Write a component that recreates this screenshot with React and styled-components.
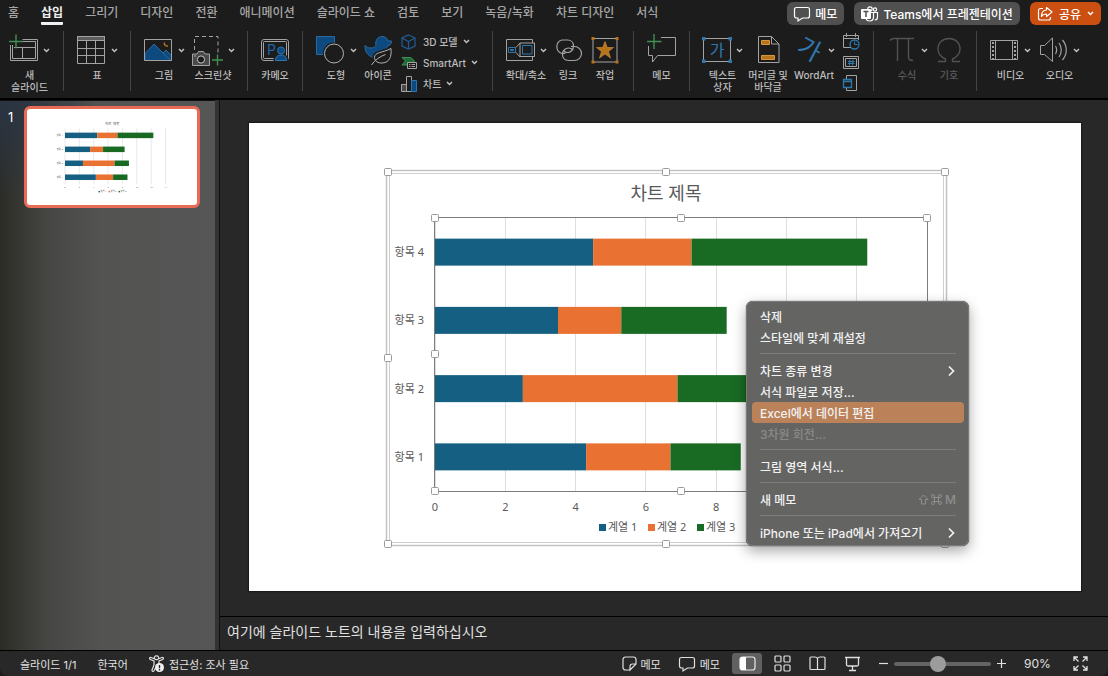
import React from "react";
import styled, { createGlobalStyle } from "styled-components";

const LINE = "#a3a3a3";
const BLUE = "#0d4a80";
const SKY = "#2f78ad";
const ORANGE = "#b8741a";
const GREEN = "#3f9150";
const BG = "#1c1c1c";

const SERIES = [
  { name: "계열 1", color: "#156082" },
  { name: "계열 2", color: "#e97132" },
  { name: "계열 3", color: "#196b24" }
];

const ROWS = [
  { name: "항목 4", values: [4.5, 2.8, 5] },
  { name: "항목 3", values: [3.5, 1.8, 3] },
  { name: "항목 2", values: [2.5, 4.4, 2] },
  { name: "항목 1", values: [4.3, 2.4, 2] }
];

const TABS = [
  "홈",
  "삽입",
  "그리기",
  "디자인",
  "전환",
  "애니메이션",
  "슬라이드 쇼",
  "검토",
  "보기",
  "녹음/녹화",
  "차트 디자인",
  "서식"
];

const MENU = [
  [{ text: "삭제" }, { text: "스타일에 맞게 재설정" }],
  [
    { text: "차트 종류 변경", sub: true },
    { text: "서식 파일로 저장..." },
    { text: "Excel에서 데이터 편집", active: true },
    { text: "3차원 회전...", disabled: true }
  ],
  [{ text: "그림 영역 서식..." }],
  [{ text: "새 메모", keys: "M" }],
  [{ text: "iPhone 또는 iPad에서 가져오기", sub: true }]
];

/* ---------- icons ---------- */

const Svg = ({ w, h, children }) => (
  <svg
    width={w}
    height={h}
    viewBox={`0 0 ${w} ${h}`}
    fill="none"
    stroke={LINE}
    strokeWidth="1"
    aria-hidden="true"
  >
    {children}
  </svg>
);

const Big = ({ children }) => (
  <Svg w={30} h={32}>
    {children}
  </Svg>
);

const Chevron = ({ color = "#c4c4c4" }) => (
  <Svg w={7} h={5}>
    <path d="M1 1l2.5 2.6L6 1" stroke={color} strokeWidth="1.4" />
  </Svg>
);

const NewSlideIcon = () => (
  <Big>
    <path d="M1.5 11v15.500h27v-21h-15M3.500 11v13.500h23v-17h-13M5 13.500h21.500M13.500 13.500v11" />
    <path d="M7 .5v14M0 7.500h14" stroke={GREEN} strokeWidth="1.4" />
  </Big>
);

const TableIcon = () => (
  <Big>
    <path d="M.5 2.500h27v4h-27z" fill="#5c5c5c" />
    <path d="M.5 2.500h27v27h-27zM9.500 6.500v23M18.500 6.500v23M.5 14.500h27M.5 21.500h27" />
  </Big>
);

const PictureIcon = () => (
  <Big>
    <path
      d="M1 19.500l9-9.500 9 9 3-3 5.500 5.500V26.500H1z"
      fill={BLUE}
      stroke="#2a6a9f"
    />
    <path d="M16 16l10 10" stroke="#2a6a9f" />
    <path d="M20.500 8.500a2.600 2.600 0 0 0 3.500 3.300" stroke={ORANGE} strokeWidth="1.4" />
    <path d="M.5 5.500h27v21H.5z" />
  </Big>
);

const ScreenshotIcon = () => (
  <Svg w={32} h={32}>
    <path d="M2.500 16V2.500h23.500V20" strokeDasharray="4 3" />
    <path d="M.5 20h4.500l1.500-2.500h5L13 20h4.500v11.500H.5z" fill="#4a4a4a" />
    <circle cx="9" cy="25.500" r="3.600" fill={BG} stroke="#c4c4c4" />
    <path d="M2 22h2" />
    <path d="M25.500 20.500v11M20 26h11" stroke={GREEN} strokeWidth="1.4" />
  </Svg>
);

const CameoIcon = () => (
  <Big>
    <rect x="1.500" y="5.500" width="27" height="21" rx="2.500" />
    <rect x="3.500" y="7.500" width="23" height="17" rx="1" />
    <text
      x="7"
      y="21"
      fill="#1f65a5"
      stroke="none"
      fontSize="14"
      fontFamily="Inter, sans-serif"
    >
      P
    </text>
    <path d="M15 27c0-4 2.500-6 6-6s6 2 6 6z" fill={BLUE} stroke={BG} strokeWidth="3" />
    <path d="M15.500 26.500c0-4 2.500-5.500 5.500-5.500s5.500 1.500 5.500 5.500z" fill={BLUE} stroke="#2d74b0" />
    <circle cx="21" cy="16.500" r="3.500" fill={BLUE} stroke="#2d74b0" />
  </Big>
);

const ShapesIcon = () => (
  <Big>
    <path d="M.5 2.500h18v18H.5z" fill={BLUE} stroke="#2a6a9f" />
    <circle cx="18" cy="19.500" r="11" fill={BG} stroke="none" />
    <circle cx="18" cy="19.500" r="9.500" stroke="#b4b4b4" />
  </Big>
);

const DuckIcon = () => (
  <Big>
    <path
      d="M2 11.500c3 3 7 3 9.500 1.500 1-.6 1.500-1.200 1.300-2.300C12.300 6 15 2.500 19 2.500c3.300 0 5.500 2 6 4.500h3.500c0 3-1.500 4.500-4 4.800-.5 2.200-1.800 3.200-1.800 5 0 3-4 7-9.700 7C6 23.800 1.500 18 2 11.500z"
      fill={BLUE}
      stroke="#2a6a9f"
    />
    <path
      d="M28 14.500c.8 8-1.500 14-8.500 14.500-4.500.3-8-1.700-8-5.500 0-5.500 8-4.500 16.500-9z"
      fill={BG}
      stroke={BG}
      strokeWidth="4"
    />
    <path
      d="M28 14.500c.8 8-1.500 14-8.500 14.500-4.500.3-8-1.700-8-5.500 0-5.500 8-4.500 16.500-9zM8.500 31c3-4.500 8-8.500 14-10.500"
      stroke="#b4b4b4"
    />
  </Big>
);

const CubeIcon = () => (
  <Svg w={17} h={16}>
    <path
      d="M7.500 1L14 4v8l-6.500 3L1 12V4zM1 4l6.500 3.500L14 4M7.500 7.500V15"
      stroke="#1f5c96"
      strokeWidth="1.200"
    />
  </Svg>
);

const SmartArtIcon = () => (
  <Svg w={17} h={16}>
    <path d="M1 2.500h9L13.500 6l-3 4H1l3.500-4z" fill="#1f6b35" stroke={GREEN} />
    <path d="M6.500 7.500h9v6h-9z" fill={BG} />
    <path d="M8 9.500h1.500M10.500 9.500H14M8 11.500h1.500M10.500 11.500H14" />
  </Svg>
);

const ColumnsIcon = () => (
  <Svg w={17} h={16}>
    <path d="M.5 8.500h5v7h-5z" fill="#4a4a4a" />
    <path d="M5.500.5h5v15h-5z" />
    <path d="M10.500 4.500h5v11h-5z" fill={BLUE} stroke="#2d74b0" />
  </Svg>
);

const ZoomIcon = () => (
  <Big>
    <path d="M13 26.500H.5v-21h26V9M26.500 23v3.500H13" />
    <path d="M2.500 13.500h7v5h-7z" stroke={SKY} />
    <path d="M4.500 15.500h3v1h-3z" stroke={SKY} />
    <path d="M10 13.500l4-4.500M10 18.500l4 4.500" />
    <path d="M14 9h14.500v13.500H14z" fill={BG} />
    <path d="M16.500 11.500h9.500v8.500h-9.500z" stroke={SKY} />
  </Big>
);

const LinkIcon = () => (
  <Big>
    <path
      d="M12.500 19.500H9a7 7 0 0 1 0-13.500h5.500c4 0 6 3 6 6 0 4-3 6.500-6 6.500-2 0-3.500-.8-4.500-2"
      strokeWidth="1.200"
    />
    <path
      d="M18 12.500h3.500a7 7 0 0 1 0 14h-6c-4 0-6-3-6-6 0-4 3-6.500 6-6.500 2 0 3.500.8 4.500 2"
      strokeWidth="1.200"
    />
  </Big>
);

const ActionIcon = () => (
  <Big>
    <path d="M3 4.500h24v23.500H3z" />
    <path
      d="M15 7.500l2.300 6h6.200l-5 4 2 6.500-5.500-4-5.500 4 2-6.500-5-4h6.200z"
      fill={ORANGE}
      stroke="#cf9544"
      strokeWidth=".6"
    />
    <path
      d="M1.500 3h3v3h-3zM25.500 3h3v3h-3zM1.500 26.500h3v3h-3zM25.500 26.500h3v3h-3z"
      fill={ORANGE}
      stroke="none"
    />
  </Big>
);

const CommentIcon = () => (
  <Big>
    <path d="M14 3.500h14.500v18h-18l-5 6.500v-6.500h-4V12" />
    <path d="M7 0v15M0 7.500h14.500" stroke={GREEN} strokeWidth="1.400" />
  </Big>
);

const TextBoxIcon = () => (
  <Big>
    <path d="M1.500 4.500h27v23h-27z" />
    <path
      d="M0 3h3.500v3.500H0zM26.500 3H30v3.500h-3.500zM0 25.500h3.500V29H0zM26.500 25.500H30V29h-3.500z"
      fill={SKY}
      stroke="none"
    />
    <text
      x="15"
      y="22"
      fill={SKY}
      stroke="none"
      fontSize="16"
      textAnchor="middle"
      fontFamily="'Noto Sans CJK KR', sans-serif"
    >
      가
    </text>
  </Big>
);

const HeaderIcon = () => (
  <Big>
    <path d="M5.500 2.500h13l7.500 7.500v18.500H5.500zM18.500 2.500V10H26" />
    <path d="M8.500 6.500h8v4h-8zM8.500 21.500h13v4h-13z" fill={ORANGE} stroke="#d3963c" />
  </Big>
);

const WordArtIcon = () => (
  <Big>
    <text
      x="15"
      y="24"
      fill={SKY}
      stroke="none"
      fontSize="25"
      textAnchor="middle"
      transform="rotate(28 15 16)"
      fontFamily="'Noto Sans CJK KR', sans-serif"
    >
      가
    </text>
  </Big>
);

const DateIcon = () => (
  <Svg w={17} h={17}>
    <path d="M8 14.500H.5V2.500h15V7M.5 5.500h15M3.500 0v4M12.500 0v4" />
    <circle cx="11.500" cy="11.500" r="4.500" fill={BG} stroke={SKY} strokeWidth="1.300" />
    <path d="M11.500 8.500v3h3" stroke={SKY} />
  </Svg>
);

const NumberIcon = () => (
  <Svg w={17} h={17}>
    <path d="M.5 2.500h15v12H.5zM2.500 4.500h11v8h-11z" />
    <path d="M7 5.500L6.500 11.500M10 5.500L9.500 11.500M5 7.500h6.500M5 9.500h6.500" stroke={SKY} />
  </Svg>
);

const ObjectIcon = () => (
  <Svg w={17} h={17}>
    <path d="M3.500 4V.5h10v15h-10V13" />
    <path d="M.5 4.500h8v8h-8zM.5 6.500h8" stroke={SKY} strokeWidth="1.300" />
  </Svg>
);

const FilmIcon = () => (
  <Big>
    <path d="M.5 6.500h27v19H.5zM5.500 6.500v19M22.500 6.500v19" />
    <path d="M3 8v17M25 8v17" strokeWidth="2" strokeDasharray="2 2" />
  </Big>
);

const AudioIcon = () => (
  <Big>
    <path d="M1.500 11.500h4L13.500 4v23.500L5.500 20.500h-4z" />
    <path d="M16.500 12c1.500 2 1.500 6 0 8M20 9c3 4 3 10 0 14M23.500 6c5 6 5 14 0 20" strokeWidth="1.200" />
  </Big>
);

const PiIcon = () => (
  <Big>
    <path
      d="M3 6.500c1-1.500 2-2 4-2h20M10.500 5v22M21.500 5v18c0 2.500 1 3.500 4.500 3.500"
      stroke="#525252"
      strokeWidth="1.400"
    />
  </Big>
);

const OmegaIcon = () => (
  <Big>
    <path
      d="M4 27.500h7.500V25C6 22.500 4 19 4 15 4 8.500 9 4.500 15 4.500S26 8.500 26 15c0 4-2 7.500-7.500 10v2.500H26"
      stroke="#525252"
      strokeWidth="1.400"
    />
  </Big>
);

const BubbleIcon = ({ color = "#fff" }) => (
  <Svg w={17} h={16}>
    <path
      d="M2.500 1.500h11c1 0 2 .8 2 2v6.500c0 1.200-1 2-2 2H8.500L4 15v-3H2.500c-1 0-2-.8-2-2V3.500c0-1.200 1-2 2-2z"
      stroke={color}
      strokeWidth="1.200"
    />
  </Svg>
);

const TeamsIcon = () => (
  <Svg w={18} h={16}>
    <circle cx="9" cy="3" r="2.200" stroke="#fff" strokeWidth="1.200" />
    <circle cx="14" cy="3.500" r="1.600" stroke="#fff" strokeWidth="1.200" />
    <path
      d="M10 6.500h6.500V11c0 2-1.200 3-2.800 3M12.500 6.500V11c0 2.500-1.500 4-4 4-1.500 0-3-.8-3.500-2"
      stroke="#fff"
      strokeWidth="1.200"
    />
    <rect x="0" y="3" width="10" height="10" rx="1" fill="#fff" stroke="none" />
    <path d="M2.500 5.500h5M5 5.500V11" stroke="#505050" strokeWidth="1.500" />
  </Svg>
);

const ShareIcon = () => (
  <Svg w={16} h={16}>
    <path
      d="M6 2.500H3.500c-1.200 0-2 .8-2 2V12c0 1.200.8 2 2 2h8c1.200 0 2-.8 2-2v-1"
      stroke="#fff"
      strokeWidth="1.200"
    />
    <path
      d="M9.500 1.500L15 6l-5.500 4.500V8C7 8 5.500 8.800 4.500 10.500c0-4 2-6.300 5-6.500z"
      stroke="#fff"
      strokeWidth="1.200"
      strokeLinejoin="round"
    />
  </Svg>
);

const AccessIcon = () => (
  <Svg w={16} h={18}>
    <path
      d="M7.500 1a1.800 1.800 0 0 1 1.800 2.800L13 2.500c1.500-.3 2 1.500.7 2L10 6v3M7.500 1a1.800 1.800 0 0 0-1.800 2.800L2 2.500C.5 2.200 0 4 1.300 4.500L5 6v4l-2 5c-.4 1.500 1.300 2 2 .8L6.500 13M5.500 3.800c1 1 3 1 4 0"
      stroke="#e0e0e0"
      strokeWidth="1.200"
    />
    <circle cx="10.500" cy="12.500" r="4.500" fill="#f2f2f2" stroke="none" />
    <path d="M10.500 10v3.200M10.500 14v1.400" stroke="#282828" strokeWidth="1.400" />
  </Svg>
);

const NoteIcon = () => (
  <Svg w={15} h={15}>
    <path
      d="M8 14H3.500A2.500 2.500 0 0 1 1 11.500v-8A2.500 2.500 0 0 1 3.500 1h8A2.500 2.500 0 0 1 14 3.500V8l-6 6v-3.500A2.500 2.500 0 0 1 10.500 8H14"
      stroke="#e0e0e0"
      strokeWidth="1.200"
    />
  </Svg>
);

const NormalIcon = () => (
  <Svg w={17} h={15}>
    <rect x="1" y="1" width="15" height="13" rx="2.500" stroke="#e8e8e8" strokeWidth="1.200" />
    <path d="M3.500 1H7v13H3.500A2.500 2.500 0 0 1 1 11.500v-8A2.500 2.500 0 0 1 3.500 1z" fill="#fff" stroke="none" />
  </Svg>
);

const SorterIcon = () => (
  <Svg w={17} h={17}>
    {[1, 10].map(x =>
      [1, 10].map(y => (
        <rect
          key={`${x}-${y}`}
          x={x}
          y={y}
          width="6"
          height="6"
          rx="1"
          stroke="#e0e0e0"
          strokeWidth="1.200"
        />
      ))
    )}
  </Svg>
);

const ReadingIcon = () => (
  <Svg w={17} h={15}>
    <path
      d="M8.500 2.500C8 1.500 7 1 6 1H2C1.500 1 1 1.500 1 2v10.500c0 .5.500 1 1 1h13c.5 0 1-.5 1-1V2c0-.5-.5-1-1-1h-4c-1 0-2 .5-2.500 1.500v11"
      stroke="#e0e0e0"
      strokeWidth="1.200"
    />
  </Svg>
);

const ShowIcon = () => (
  <Svg w={17} h={16}>
    <path
      d="M1 1.500h15M2.500 2v6.500c0 1 .5 1.500 1.500 1.500h9c1 0 1.500-.5 1.500-1.500V2M8.500 10v4M5 14.500h7"
      stroke="#e0e0e0"
      strokeWidth="1.300"
    />
  </Svg>
);

const FitIcon = () => (
  <Svg w={15} h={15}>
    <path
      d="M1 5V1h4M1 1l4.500 4.500M10 1h4v4M14 1L9.500 5.500M1 10v4h4M1 14l4.500-4.500M14 10v4h-4M14 14L9.500 9.500"
      stroke="#e0e0e0"
      strokeWidth="1.300"
    />
  </Svg>
);

const MenuArrow = () => (
  <Svg w={8} h={12}>
    <path d="M1 1.500L5.500 6 1 10.500" stroke="#f2f2f2" strokeWidth="1.700" />
  </Svg>
);

const ShiftCommand = () => (
  <Svg w={24} h={11}>
    <path d="M5.500 1L10 5.500H7.500V10h-4V5.500H1z" stroke="#8e8e8d" />
    <path
      d="M16.500 3.500H15A1.500 1.500 0 1 1 16.500 2v7A1.500 1.500 0 1 1 15 7.500h7A1.500 1.500 0 1 1 20.500 9V2A1.500 1.500 0 1 1 22 3.500z"
      stroke="#8e8e8d"
    />
  </Svg>
);

/* ---------- chart ---------- */

const PLOT = { x: 186, y: 95, w: 492, h: 273, max: 14 };
const TICKS = [0, 2, 4, 6, 8, 10, 12, 14];
const scale = v => (v * PLOT.w) / PLOT.max;

const Chart = ({ selected, labels = TICKS }) => {
  const band = PLOT.h / ROWS.length;
  return (
    <ChartSvg viewBox="0 0 832 468" role="img" aria-label="차트 제목">
      <text x="417" y="77" fontSize="18" textAnchor="middle">
        차트 제목
      </text>
      {TICKS.map(v => (
        <line
          key={v}
          x1={PLOT.x + scale(v)}
          x2={PLOT.x + scale(v)}
          y1={PLOT.y}
          y2={PLOT.y + PLOT.h}
          stroke={selected ? "#dedede" : "#c8c8c8"}
          strokeWidth={selected ? 1 : 2}
          shapeRendering={selected ? "crispEdges" : undefined}
        />
      ))}
      {labels.map(v => (
        <text key={v} x={PLOT.x + scale(v)} y="388" textAnchor="middle">
          {v}
        </text>
      ))}
      {ROWS.map((row, i) => {
        const mid = PLOT.y + band * (i + 0.5);
        let start = PLOT.x;
        return (
          <g key={row.name}>
            <text x="175" y={mid + 4} textAnchor="end">
              {row.name}
            </text>
            {row.values.map((v, n) => {
              const x = start;
              start += scale(v);
              return (
                <rect
                  key={n}
                  x={x}
                  y={mid - 13.5}
                  width={scale(v)}
                  height="27"
                  fill={SERIES[n].color}
                />
              );
            })}
          </g>
        );
      })}
      {SERIES.map((s, i) => (
        <g key={s.name}>
          <rect x={350 + i * 49} y="401" width="7" height="7" fill={s.color} />
          <text x={359 + i * 49} y="408">
            {s.name}
          </text>
        </g>
      ))}
      {selected && (
        <g fill="none">
          <rect x="137.500" y="47.500" width="560" height="375" stroke="#c2c2c2" strokeWidth="1.500" />
          <rect x="140.500" y="50.500" width="554" height="369" stroke="#cfcfcf" />
          <rect
            x={PLOT.x - 0.5}
            y={PLOT.y - 0.5}
            width={PLOT.w + 1}
            height={PLOT.h + 1}
            stroke="#7c7c7c"
          />
          <Handles x={139} y={49} w={557} h={372} />
          <Handles x={PLOT.x} y={PLOT.y} w={PLOT.w} h={PLOT.h} />
        </g>
      )}
    </ChartSvg>
  );
};

const Handles = ({ x, y, w, h }) =>
  [0, 0.5, 1].map(a =>
    [0, 0.5, 1]
      .filter(b => !(a === 0.5 && b === 0.5))
      .map(b => (
        <rect
          key={`${a}-${b}`}
          x={Math.floor(x + w * a) - 3.5}
          y={Math.floor(y + h * b) - 3.5}
          width="7"
          height="7"
          rx="1"
          fill="#fff"
          stroke="#9a9a9a"
        />
      ))
  );

/* ---------- ribbon ---------- */

const Tool = ({ label, icon, menu, width = 30, disabled }) => (
  <ToolButton $width={width} disabled={disabled}>
    <ToolIcon>
      {icon}
      {menu && <Chevron />}
    </ToolIcon>
    <ToolLabel>{label}</ToolLabel>
  </ToolButton>
);

const Ribbon = () => (
  <RibbonBar>
    <Group $first>
      <Tool width={43} menu icon={<NewSlideIcon />} label={"새\n슬라이드"} />
    </Group>
    <Group>
      <Tool width={42} menu icon={<TableIcon />} label="표" />
    </Group>
    <Group>
      <Tool width={42} menu icon={<PictureIcon />} label="그림" />
      <Tool width={44} menu icon={<ScreenshotIcon />} label="스크린샷" />
    </Group>
    <Group>
      <Tool icon={<CameoIcon />} label="카메오" />
    </Group>
    <Group>
      <Tool width={42} menu icon={<ShapesIcon />} label="도형" />
      <Tool icon={<DuckIcon />} label="아이콘" />
      <Stack>
        <SmallButton>
          <CubeIcon />
          3D 모델
          <Chevron />
        </SmallButton>
        <SmallButton>
          <SmartArtIcon />
          SmartArt
          <Chevron />
        </SmallButton>
        <SmallButton>
          <ColumnsIcon />
          차트
          <Chevron />
        </SmallButton>
      </Stack>
    </Group>
    <Group>
      <Tool width={42} menu icon={<ZoomIcon />} label="확대/축소" />
      <Tool icon={<LinkIcon />} label="링크" />
      <Tool width={32} icon={<ActionIcon />} label="작업" />
    </Group>
    <Group>
      <Tool width={31} icon={<CommentIcon />} label="메모" />
    </Group>
    <Group>
      <Tool width={41} menu icon={<TextBoxIcon />} label={"텍스트\n상자"} />
      <Tool width={38} icon={<HeaderIcon />} label={"머리글 및\n바닥글"} />
      <Tool width={42} menu icon={<WordArtIcon />} label="WordArt" />
      <Stack $narrow>
        <SmallButton aria-label="날짜 및 시간">
          <DateIcon />
        </SmallButton>
        <SmallButton aria-label="슬라이드 번호">
          <NumberIcon />
        </SmallButton>
        <SmallButton aria-label="개체">
          <ObjectIcon />
        </SmallButton>
      </Stack>
    </Group>
    <Group>
      <Tool width={42} menu disabled icon={<PiIcon />} label="수식" />
      <Tool disabled icon={<OmegaIcon />} label="기호" />
    </Group>
    <Group $last>
      <Tool width={43} menu icon={<FilmIcon />} label="비디오" />
      <Tool width={43} menu icon={<AudioIcon />} label="오디오" />
    </Group>
  </RibbonBar>
);

const ContextMenu = () => (
  <MenuBox role="menu">
    {MENU.map((items, i) => (
      <MenuSection key={i}>
        {items.map(item => (
          <MenuItem
            key={item.text}
            role="menuitem"
            $active={item.active}
            disabled={item.disabled}
          >
            {item.text}
            {item.sub && <MenuArrow />}
            {item.keys && (
              <Shortcut>
                <ShiftCommand />
                {item.keys}
              </Shortcut>
            )}
          </MenuItem>
        ))}
      </MenuSection>
    ))}
  </MenuBox>
);

class App extends React.Component {
  constructor(props) {
    super(props);
    this.state = {
      tab: "삽입",
      zoom: 90
    };
  }

  handleTab = e => {
    this.setState({ tab: e.target.id });
  };

  handleZoom = e => {
    this.setState({ zoom: Number(e.target.value) });
  };

  render() {
    return (
      <Window>
        <GlobalStyle />
        <TabBar>
          <Tabs>
            {TABS.map(tab => (
              <Tab
                id={tab}
                key={tab}
                $active={tab === this.state.tab}
                onClick={this.handleTab}
              >
                {tab}
              </Tab>
            ))}
          </Tabs>
          <Actions>
            <Action>
              <BubbleIcon />
              메모
            </Action>
            <Action>
              <TeamsIcon />
              Teams에서 프레젠테이션
            </Action>
            <Action $primary>
              <ShareIcon />
              공유
              <Chevron color="#fff" />
            </Action>
          </Actions>
        </TabBar>
        <Ribbon />

        <Main>
          <Sidebar>
            <SlideNumber>1</SlideNumber>
            <Thumb aria-label="슬라이드 1">
              <Chart />
            </Thumb>
          </Sidebar>
          <Editor>
            <Stage>
              <Slide>
                <Chart selected labels={[0, 2, 4, 6, 8]} />
                <ContextMenu />
              </Slide>
            </Stage>
            <Notes
              rows={1}
              aria-label="슬라이드 노트"
              placeholder="여기에 슬라이드 노트의 내용을 입력하십시오"
            />
          </Editor>
        </Main>

        <StatusBar>
          <StatusLeft>
            <span>슬라이드 1/1</span>
            <StatusButton>한국어</StatusButton>
            <StatusButton>
              <AccessIcon />
              접근성: 조사 필요
            </StatusButton>
          </StatusLeft>
          <StatusRight>
            <StatusButton>
              <NoteIcon />
              메모
            </StatusButton>
            <StatusButton>
              <BubbleIcon color="#e0e0e0" />
              메모
            </StatusButton>
            <Views>
              <ViewButton $active aria-label="기본">
                <NormalIcon />
              </ViewButton>
              <ViewButton aria-label="여러 슬라이드">
                <SorterIcon />
              </ViewButton>
              <ViewButton aria-label="읽기용 보기">
                <ReadingIcon />
              </ViewButton>
              <ViewButton aria-label="슬라이드 쇼">
                <ShowIcon />
              </ViewButton>
            </Views>
            <ZoomBox>
              <ZoomButton aria-label="축소">
                <Svg w={9} h={9}>
                  <path d="M0 4.500h9" stroke="#e0e0e0" strokeWidth="1.200" />
                </Svg>
              </ZoomButton>
              <ZoomRange
                type="range"
                min="0"
                max="200"
                aria-label="확대/축소"
                value={this.state.zoom}
                onChange={this.handleZoom}
              />
              <ZoomButton aria-label="확대">
                <Svg w={9} h={9}>
                  <path d="M0 4.500h9M4.500 0v9" stroke="#e0e0e0" strokeWidth="1.200" />
                </Svg>
              </ZoomButton>
            </ZoomBox>
            <ZoomValue>{this.state.zoom}%</ZoomValue>
            <ZoomButton aria-label="창에 맞춤">
              <FitIcon />
            </ZoomButton>
          </StatusRight>
        </StatusBar>
      </Window>
    );
  }
}

export default App;

const GlobalStyle = createGlobalStyle`
  * {
    box-sizing: border-box;
  }
  body {
    margin: 0;
    background: #1c1c1c;
    font-family: Inter, "Noto Sans CJK KR", sans-serif;
  }
  button {
    border: 0;
    padding: 0;
    background: none;
    color: inherit;
    font-family: inherit;
    white-space: nowrap;
  }
  svg {
    display: block;
    flex: none;
    overflow: visible;
  }
`;

const Window = styled.div`
  display: flex;
  flex-direction: column;
  min-height: 100vh;
  color: #e0e0e0;
`;

const TabBar = styled.div`
  display: flex;
  justify-content: space-between;
  height: 28px;
  padding: 0 7px 0 8px;
`;

const Tabs = styled.nav`
  display: flex;
  gap: 22px;
`;

const Tab = styled.button`
  height: 25px;
  font-size: 12px;
  font-weight: ${props => (props.$active ? 700 : 500)};
  color: ${props => (props.$active ? "#f0f0f0" : "#a6a6a6")};
  border-bottom: 3px solid ${props => (props.$active ? "#f0f0f0" : "transparent")};
  border-radius: 1px;
`;

const Actions = styled.div`
  display: flex;
  gap: 10px;
  padding: 2px 0 3px;
`;

const Action = styled.button`
  display: flex;
  align-items: center;
  gap: ${props => (props.$primary ? 6 : 4)}px;
  padding: 0 7px;
  border-radius: 6px;
  font-size: 12px;
  font-weight: 500;
  color: #fff;
  background: ${props => (props.$primary ? "#cb4f10" : "#505050")};
`;

const RibbonBar = styled.div`
  display: flex;
  padding: 3px 0 7px;
  border-bottom: 2px solid #000;
`;

const Group = styled.div`
  display: flex;
  gap: 6px;
  height: 60px;
  padding: 0 12px 0 ${props => (props.$first ? 8 : 12)}px;
  border-right: 1px solid ${props => (props.$last ? "transparent" : "#444")};
`;

const ToolButton = styled.button`
  display: flex;
  flex-direction: column;
  align-items: center;
  width: ${props => props.$width}px;
  padding-top: 3px;
  color: #bdbdbd;
  &:disabled {
    color: #5c5c5c;
  }
`;

const ToolIcon = styled.span`
  display: flex;
  align-items: center;
  justify-content: center;
  gap: 4px;
  height: 32px;
`;

const ToolLabel = styled.span`
  margin-top: 3px;
  font-size: 10px;
  font-weight: 500;
  line-height: 12px;
  white-space: pre;
`;

const Stack = styled.div`
  display: flex;
  flex-direction: column;
  width: ${props => (props.$narrow ? 20 : 81)}px;
  padding-left: 2px;
`;

const SmallButton = styled.button`
  display: flex;
  align-items: center;
  gap: 5px;
  height: 21px;
  flex: none;
  font-size: 10px;
  font-weight: 500;
  color: #bdbdbd;
`;

const Main = styled.main`
  display: flex;
  flex: 1;
`;

const Sidebar = styled.aside`
  display: flex;
  align-items: flex-start;
  gap: 10px;
  width: 219px;
  padding: 6px 15px 0 8px;
  border-right: 4px solid #333;
  box-shadow: inset 0 1px #111;
  background: radial-gradient(circle at 0 0, #2a3444 0, rgba(42, 52, 68, 0) 100px),
    linear-gradient(90deg, #2b2c26 0, #474745 50px, #535352 100px, #565656);
`;

const SlideNumber = styled.span`
  width: 6px;
  font-size: 13px;
  line-height: 22px;
  color: #fff;
`;

const Thumb = styled.button`
  flex: 1;
  border: 3px solid #ea6b55;
  border-radius: 6px;
  background: #fff;
`;

const Editor = styled.section`
  display: flex;
  flex-direction: column;
  flex: 1;
  background: #282828;
  border-left: 1px solid #111;
`;

const Stage = styled.div`
  flex: 1;
  padding: 23px 27px 24px 29px;
`;

const Slide = styled.div`
  position: relative;
  background: #fff;
  box-shadow: 0 0 1px 1px #1a1a1a;
`;

const ChartSvg = styled.svg`
  width: 100%;
  fill: #595959;
  font-family: "Noto Sans", "Noto Sans CJK KR", sans-serif;
  font-size: 11px;
`;

const Notes = styled.textarea`
  height: 34px;
  padding: 5px 7px;
  border: 0;
  border-top: 1px solid #000;
  outline: none;
  resize: none;
  overflow: hidden;
  background: #282828;
  color: #e0e0e0;
  font-family: inherit;
  font-size: 14px;
  line-height: 20px;
  &::placeholder {
    color: #e0e0e0;
  }
`;

const MenuBox = styled.div`
  position: absolute;
  left: 497px;
  top: 178px;
  width: 223px;
  padding: 5px 5px 3px 6px;
  border-radius: 7px;
  background: #646463;
  box-shadow: inset 0 0 0 1px #7a7a79, 0 0 1px #000, 0 5px 14px rgba(0, 0, 0, 0.35);
`;

const MenuSection = styled.div`
  & + &::before {
    content: "";
    display: block;
    height: 1px;
    margin: 5px 8px 6px;
    background: #7d7d7c;
  }
`;

const MenuItem = styled.button`
  display: flex;
  align-items: center;
  justify-content: space-between;
  width: 100%;
  height: 21px;
  padding: 0 8px;
  border-radius: 4px;
  font-size: 12px;
  font-weight: 500;
  color: #f2f2f2;
  background: ${props => (props.$active ? "#bb8259" : "none")};
  &:disabled {
    color: #8a8a89;
  }
`;

const Shortcut = styled.span`
  display: flex;
  align-items: center;
  gap: 3px;
  color: #8e8e8d;
`;

const StatusBar = styled.footer`
  display: flex;
  justify-content: space-between;
  height: 26px;
  padding: 0 20px;
  border-top: 1px solid #000;
  border-radius: 0 0 8px 8px;
  background: #282828;
  font-size: 11px;
`;

const StatusLeft = styled.div`
  display: flex;
  align-items: center;
  gap: 21px;
`;

const StatusRight = styled.div`
  display: flex;
  align-items: center;
  gap: 18px;
`;

const StatusButton = styled.button`
  display: flex;
  align-items: center;
  gap: 4px;
  font-size: 11px;
`;

const Views = styled.div`
  display: flex;
  gap: 5px;
  margin: 0 -6px;
`;

const ViewButton = styled.button`
  display: flex;
  align-items: center;
  justify-content: center;
  width: 30px;
  height: 21px;
  border-radius: 3px;
  background: ${props => (props.$active ? "#606060" : "none")};
`;

const ZoomBox = styled.div`
  display: flex;
  align-items: center;
  gap: 6px;
`;

const ZoomButton = styled.button`
  display: flex;
`;

const ZoomRange = styled.input`
  appearance: none;
  width: 97px;
  height: 16px;
  margin: 0;
  background: none;
  &::-webkit-slider-runnable-track {
    height: 4px;
    border-radius: 2px;
    background: #636363;
  }
  &::-webkit-slider-thumb {
    appearance: none;
    width: 16px;
    height: 16px;
    margin-top: -6px;
    border-radius: 50%;
    background: #9c9c9c;
  }
`;

const ZoomValue = styled.span`
  width: 31px;
  font-size: 12px;
`;
